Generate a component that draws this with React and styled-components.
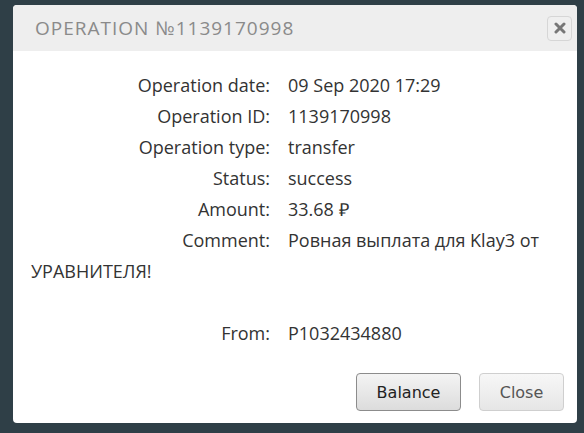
import React from 'react'
import styled, { createGlobalStyle } from 'styled-components'

const Global = createGlobalStyle`
  html, body {
    margin: 0;
    padding: 0;
    background: #2f3f47;
  }
`

const Page = styled.div`
  width: 584px;
  height: 433px;
  padding: 5px 0 0 13px;
  box-sizing: border-box;
`

const Dialog = styled.div`
  width: 564px;
  height: 418px;
  background: #fff;
  border-radius: 4px;
  overflow: hidden;
  display: flex;
  flex-direction: column;
`

const Header = styled.div`
  height: 46px;
  background: #eeeeee;
  display: flex;
  align-items: center;
  justify-content: space-between;
  padding: 0 5px 0 22px;
`

const Title = styled.h2`
  margin: 0;
  font-family: "Open Sans", sans-serif;
  font-weight: 400;
  font-size: 19px;
  letter-spacing: 1px;
  color: #8a8a8a;
`

const CloseX = styled.button`
  width: 25px;
  height: 25px;
  padding: 0;
  border: 1px solid #d6d6d6;
  border-radius: 4px;
  background: #efefef;
  display: flex;
  align-items: center;
  justify-content: center;
`

const Body = styled.div`
  flex: 1;
  padding: 19px 18px 0 18px;
  font-family: "Open Sans", sans-serif;
  font-size: 18px;
  line-height: 31px;
  color: #333;
`

const Row = styled.div`
  min-height: 31px;
`

const Label = styled.span`
  display: inline-block;
  width: 239px;
  text-align: right;
  margin-right: 18px;
`

const Footer = styled.div`
  display: flex;
  justify-content: flex-end;
  gap: 18px;
  padding: 0 13px 12px 0;
`

const Button = styled.button`
  height: 38px;
  width: ${p => p.$w}px;
  font-family: "DejaVu Sans", Verdana, sans-serif;
  font-size: 16px;
  color: ${p => (p.$primary ? '#222' : '#555')};
  border: 1px solid ${p => (p.$primary ? '#8c8c8c' : '#cfcfcf')};
  border-radius: 4px;
  background: ${p => (p.$primary
    ? 'linear-gradient(#f4f4f4, #dcdcdc)'
    : 'linear-gradient(#f7f7f7, #e6e6e6)')};
`

const rows = [
  ['Operation date:', '09 Sep 2020 17:29'],
  ['Operation ID:', '1139170998'],
  ['Operation type:', 'transfer'],
  ['Status:', 'success'],
  ['Amount:', '33.68 ₽'],
  ['Comment:', 'Ровная выплата для Klay3 от УРАВНИТЕЛЯ!'],
  ['', ''],
  ['From:', 'P1032434880']
]

export default function App() {
  return (
    <Page>
      <Global />
      <Dialog>
        <Header>
          <Title>OPERATION №1139170998</Title>
          <CloseX>
            <svg width="12" height="12" viewBox="0 0 12 12">
              <path d="M2 2L10 10M10 2L2 10" stroke="#777" strokeWidth="3" strokeLinecap="round" />
            </svg>
          </CloseX>
        </Header>
        <Body>
          {rows.map(([k, v], i) => (
            <Row key={i}>
              {k && <Label>{k}</Label>}
              {v}
            </Row>
          ))}
        </Body>
        <Footer>
          <Button $primary $w={105}>Balance</Button>
          <Button $w={85}>Close</Button>
        </Footer>
      </Dialog>
    </Page>
  )
}
